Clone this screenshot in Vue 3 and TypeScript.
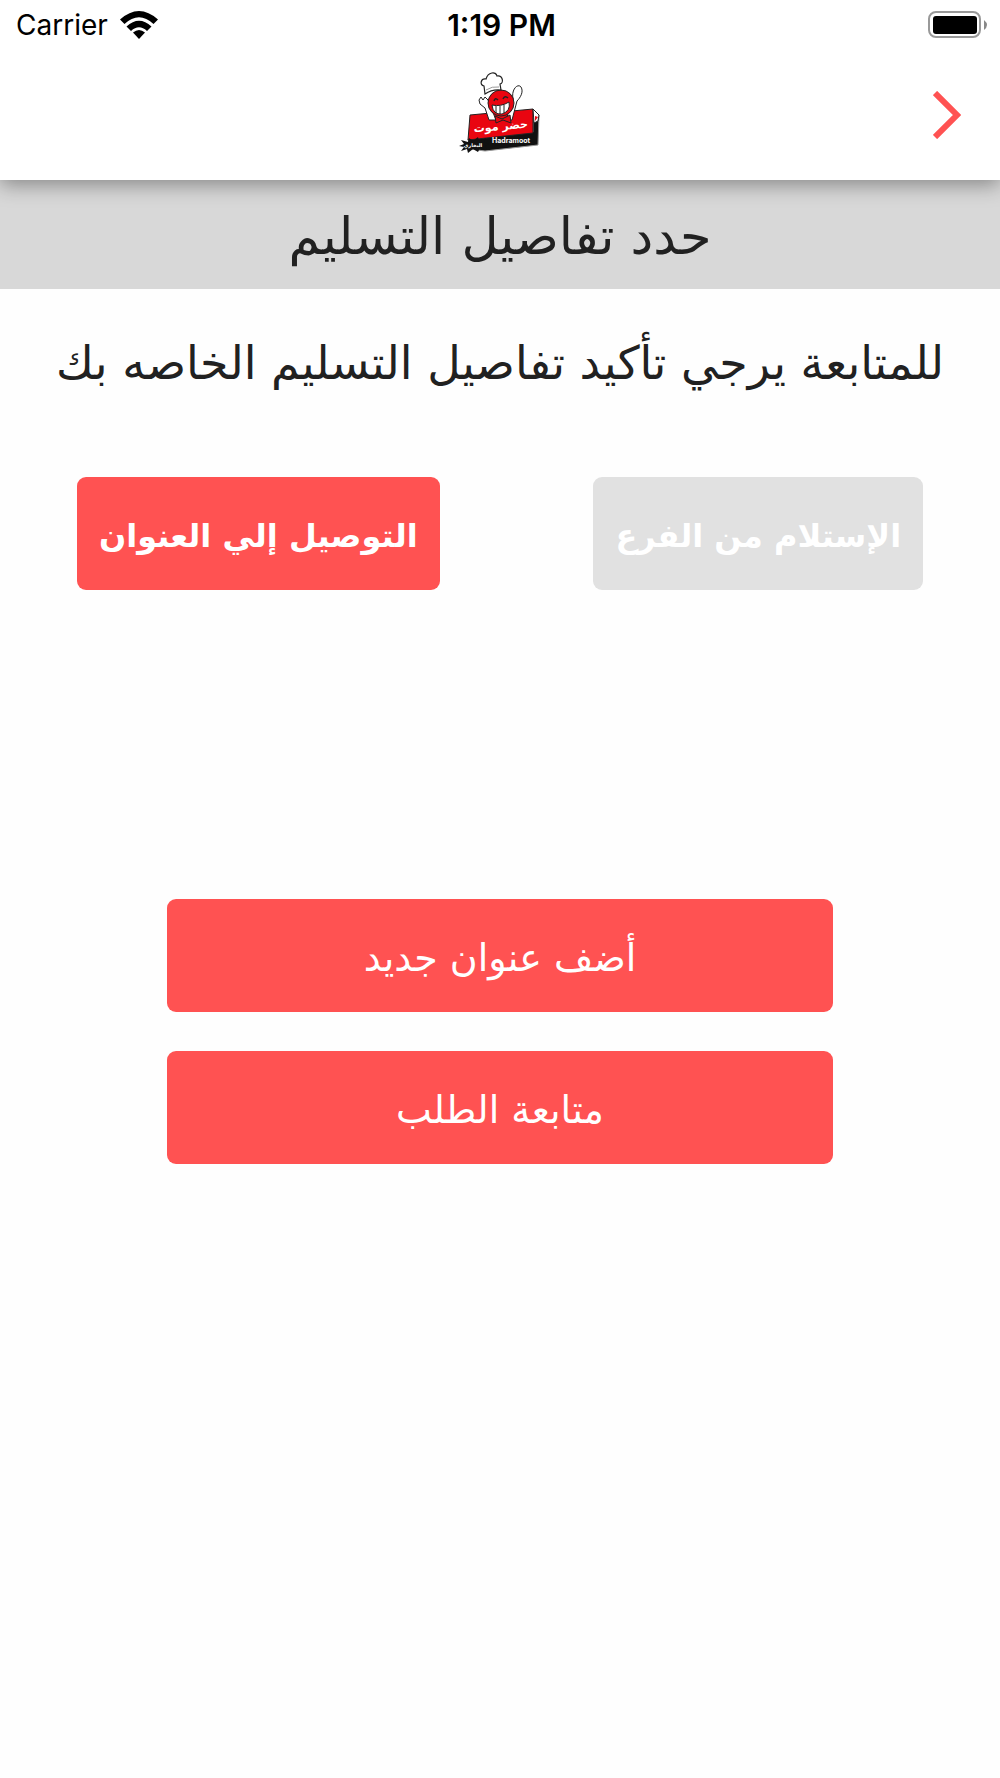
<script setup lang="ts">
import { ref } from 'vue'

type Method = 'pickup' | 'delivery'

const methods: { id: Method; label: string }[] = [
  { id: 'pickup', label: 'الإستلام من الفرع' },
  { id: 'delivery', label: 'التوصيل إلي العنوان' },
]
const selected = ref<Method>('delivery')
</script>

<template>
  <div class="screen" dir="rtl">
    <header class="top">
      <div class="status" dir="ltr">
        <div class="carrier">
          <span>Carrier</span>
          <svg width="38" height="28" viewBox="0 0 38 28" aria-hidden="true">
            <path d="M0 8.500Q19-8.500 38 8.500L33.500 13Q19-.5 4.500 13Z" />
            <path d="M6.500 15.500Q19 4 31.500 15.500L27 20Q19 12.500 11 20Z" />
            <path d="M13 21.500Q19 16.500 25 21.500L19 28Z" />
          </svg>
        </div>
        <time class="clock">1:19 PM</time>
        <div class="battery">
          <svg width="60" height="28" viewBox="0 0 60 28" aria-hidden="true">
            <rect x="2" y="1" width="51" height="25" rx="7" fill="#fff" stroke="#999" stroke-width="2" />
            <rect x="6" y="5" width="44" height="18" rx="3" />
            <path d="M57 9Q63 14 57 19Z" fill="#888" />
          </svg>
        </div>
      </div>
      <div class="bar">
        <button class="back" type="button" aria-label="رجوع">
          <svg width="28" height="48" viewBox="0 0 28 48" aria-hidden="true">
            <path d="M2 2L24 24L2 46" fill="none" stroke="#ff5252" stroke-width="6" />
          </svg>
        </button>
        <svg class="logo" width="84" height="84" viewBox="0 0 84 84" direction="ltr" role="img" aria-label="Hadramoot">
          <path d="M10 66L75 59L75 36L81 42L80 72L27 78L12 76Z" fill="#111" stroke="#999" />
          <path d="M12 42L75 36L75 60L10 67Z" fill="#e90510" stroke="#222" />
          <path d="M75 36L81 42L80 48L76 50Z" fill="#fff" stroke="#222" />
          <path d="M77 43L80 44L77 48Z" fill="#e90510" />
          <path d="M21 27L23 24L25 27L27 24L30 27L38 47L31 47L27 35L22 31Z" fill="#fff" stroke="#222" />
          <path d="M55 26C53 16 60 10 63 14C66 19 62 25 59 28L54 47L48 47Z" fill="#fff" stroke="#222" />
          <circle cx="43" cy="30" r="13" fill="#e90510" stroke="#222" />
          <path d="M27 21L26 13C21 12 23 5 28 6C30-1 38-2 39 3C45 2 46 10 42 11L43 17Q34 16 27 21Z" fill="#fff" stroke="#222" stroke-width="1.200" />
          <path d="M28 17Q34 13 41 14" fill="none" stroke="#999" />
          <path d="M34 32Q43 34 51 29Q53 38 44 41Q35 42 34 32Z" fill="#fff" stroke="#222" />
          <path d="M38 33V40M42 33V41M46 32V40" fill="none" stroke="#222" />
          <path d="M36 28Q37 24 40 27M45 26Q47 22 50 25" fill="none" stroke="#222" stroke-width="1.500" />
          <path d="M37 43L44 46L52 42L53 50L45 47L38 50Z" fill="#e90510" stroke="#222" />
          <path d="M1 73L6 71L3 67L10 69L11 65L15 68L20 64L21 68L28 65L26 69L31 71L27 73L29 77L22 75L20 79L15 76L10 80L9 76L3 78L6 74Z" fill="#111" />
          <g transform="rotate(-5 43 56)">
            <text x="43" y="57" class="logo-ar">حضر موت</text>
          </g>
          <text x="53" y="70" class="logo-en">Hadramoot</text>
          <text x="15" y="74" class="logo-tag">البخاري</text>
        </svg>
      </div>
    </header>

    <main>
      <h1>حدد تفاصيل التسليم</h1>
      <p class="lead">للمتابعة يرجي تأكيد تفاصيل التسليم الخاصه بك</p>
      <div class="methods">
        <button
          v-for="m in methods"
          :key="m.id"
          type="button"
          class="btn method"
          :class="{ off: selected !== m.id }"
          :aria-pressed="selected === m.id"
          @click="selected = m.id"
        >
          {{ m.label }}
        </button>
      </div>
      <div class="actions">
        <button type="button" class="btn">أضف عنوان جديد</button>
        <button type="button" class="btn">متابعة الطلب</button>
      </div>
    </main>
  </div>
</template>

<style>
body {
  margin: 0;
  background: #fefefe;
}
</style>

<style scoped>
.screen {
  min-height: 100vh;
  color: #212121;
  font-family: 'DejaVu Sans', sans-serif;
}
.top {
  position: relative;
  background: #fff;
  box-shadow: 0 4px 20px rgba(0, 0, 0, 0.4);
}
.status {
  display: grid;
  grid-template-columns: 1fr auto 1fr;
  align-items: center;
  height: 50px;
  padding: 0 13px 0 16px;
  color: #000;
  font-family: Inter, sans-serif;
  font-size: 28px;
}
.carrier {
  display: flex;
  align-items: center;
  gap: 12px;
}
.clock {
  font-size: 30px;
  font-weight: 600;
}
.battery {
  display: flex;
  justify-content: flex-end;
}
.bar {
  display: grid;
  grid-template-columns: 1fr auto 1fr;
  align-items: center;
  height: 130px;
  padding: 0 39px;
}
.back {
  justify-self: start;
  display: flex;
  padding: 0;
  border: 0;
  background: none;
}
.logo {
  overflow: visible;
}
.logo text {
  text-anchor: middle;
  fill: #fff;
  font-weight: 700;
}
.logo-ar {
  font-size: 11px;
}
.logo-en {
  font-family: Inter, sans-serif;
  font-size: 7px;
}
.logo-tag {
  font-size: 5px;
}
h1 {
  margin: 0;
  padding-top: 4px;
  background: #d8d8d8;
  font-size: 51px;
  font-weight: 400;
  line-height: 105px;
  text-align: center;
}
.lead {
  margin: 28px 0 68px;
  font-size: 46px;
  line-height: 92px;
  text-align: center;
  white-space: nowrap;
}
.methods {
  display: flex;
  justify-content: space-around;
}
.btn {
  height: 113px;
  padding: 4px 22px 0;
  border: 0;
  border-radius: 9px;
  background: #ff5252;
  color: #fff;
  font-family: inherit;
  font-size: 38px;
  white-space: nowrap;
}
.method {
  font-size: 32px;
  font-weight: 700;
}
.off {
  background: #e1e1e1;
}
.actions {
  display: grid;
  gap: 39px;
  width: calc(100% * 2 / 3);
  margin: 309px auto 0;
}
</style>
